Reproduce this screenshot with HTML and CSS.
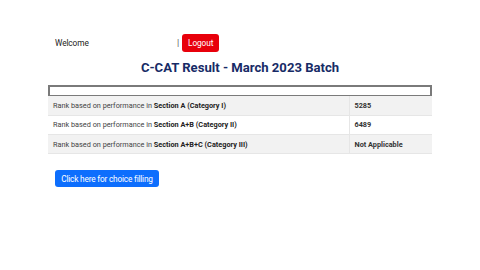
FILE: index.html
```html
<!DOCTYPE html>
<html>
<head>
<meta charset="utf-8">
<link rel="stylesheet" href="styles.css">
</head>
<body>
<div class="page">
  <div class="topbar">
    <span class="welcome">Welcome</span>
    <span class="sep">|</span>
    <button class="logout">Logout</button>
  </div>
  <h1 class="title">C-CAT Result - March 2023 Batch</h1>
  <div class="emptybox"></div>
  <table class="results">
    <tr class="odd">
      <td class="label">Rank based on performance in <b>Section A (Category I)</b></td>
      <td class="value">5285</td>
    </tr>
    <tr>
      <td class="label">Rank based on performance in <b>Section A+B (Category II)</b></td>
      <td class="value">6489</td>
    </tr>
    <tr class="odd">
      <td class="label">Rank based on performance in <b>Section A+B+C (Category III)</b></td>
      <td class="value">Not Applicable</td>
    </tr>
  </table>
  <button class="choice">Click here for choice filling</button>
</div>
</body>
</html>
```
FILE: styles.css
```css
* { box-sizing: border-box; }
html, body { margin: 0; padding: 0; background: #fff; }
body { font-family: Roboto, "Liberation Sans", sans-serif; color: #222; }
.page { width: 480px; height: 270px; padding: 34px 48px 0 48px; }
.topbar { display: flex; align-items: center; height: 18px; padding-left: 7px; }
.welcome { font-size: 8.3px; letter-spacing: -0.1px; color: #222; width: 122px; }
.sep { font-size: 9px; color: #555; margin-right: 3px; }
.logout {
  background: #e8000b; color: #fff; border: none; border-radius: 3px;
  font-family: Roboto, "Liberation Sans", sans-serif; font-size: 8.3px; letter-spacing: -0.1px;
  height: 18px; width: 37px; padding: 0;
}
.title {
  margin: 6px 0 0 0; text-align: center; font-size: 13.1px; font-weight: 700;
  color: #172b66; height: 20px; line-height: 20px;
}
.emptybox { margin-top: 7px; height: 11px; border: 2px solid #7a7a7a; border-bottom-width: 1px; }
.results { width: 100%; border-collapse: collapse; font-size: 7.3px; }
.results td { height: 19.3px; padding: 0 5px; border-bottom: 1px solid #e6e6e6; color: #444; }
.results tr.odd td { background: #f2f2f2; }
.results td.value { width: 83px; border-left: 1px solid #e6e6e6; font-weight: 700; color: #333; }
.results b { color: #222; }
.choice {
  margin: 16px 0 0 7px; background: #0d6efd; color: #fff; border: none; border-radius: 3px;
  font-family: Roboto, "Liberation Sans", sans-serif; font-size: 8.3px; letter-spacing: -0.2px;
  height: 17px; width: 104px; padding: 0;
}
```
